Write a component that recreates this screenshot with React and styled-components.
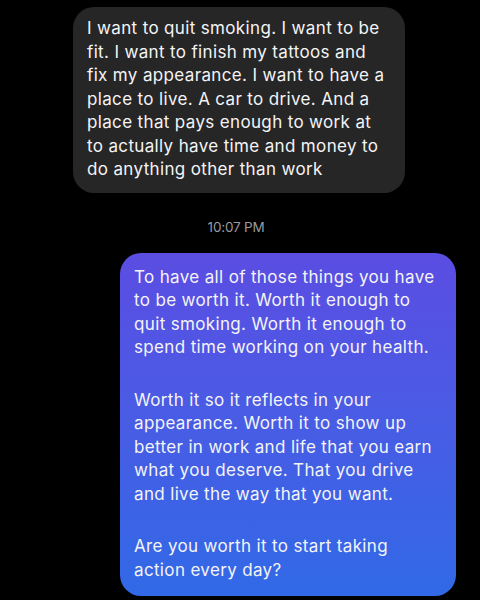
import styled, { createGlobalStyle } from 'styled-components';

const GlobalStyle = createGlobalStyle`
  html, body {
    margin: 0;
    padding: 0;
    background: #000;
  }
  body {
    font-family: Inter, "Noto Sans", "Liberation Sans", sans-serif;
    -webkit-font-smoothing: antialiased;
  }
`;

const Thread = styled.div`
  width: 480px;
  height: 600px;
  overflow: hidden;
  background: #000;
  display: flex;
  flex-direction: column;
  padding-top: 7px;
  box-sizing: border-box;
`;

const Row = styled.div`
  display: flex;
  justify-content: ${(p) => (p.$out ? 'flex-end' : 'flex-start')};
  padding: ${(p) => (p.$out ? '0 24px 0 0' : '0 0 0 73px')};
`;

const Bubble = styled.div`
  box-sizing: border-box;
  width: ${(p) => p.$width}px;
  padding: ${(p) => (p.$out ? '13px 16px 14px 14px' : '10px 16px 11px 14px')};
  border-radius: 21px;
  color: #f4f4f6;
  font-size: 17px;
  line-height: 23.5px;
  letter-spacing: 0.35px;
  background: ${(p) =>
    p.$out
      ? 'linear-gradient(180deg, #5b4de2 0%, #4a5be4 45%, #3169e6 100%)'
      : '#262626'};
`;

const Para = styled.p`
  margin: 0;
  & + & {
    margin-top: 29px;
  }
`;

const Stamp = styled.div`
  text-align: center;
  color: #9a9a9f;
  font-size: 13.5px;
  letter-spacing: -0.2px;
  padding: 26px 8px 18px 0;
`;

export default function App() {
  return (
    <>
      <GlobalStyle />
      <Thread>
        <Row>
          <Bubble $width={332}>
            <Para>
              I want to quit smoking. I want to be fit. I want to finish my tattoos and
              fix my appearance. I want to have a place to live. A car to drive. And a
              place that pays enough to work at to actually have time and money to do
              anything other than work
            </Para>
          </Bubble>
        </Row>
        <Stamp>10:07 PM</Stamp>
        <Row $out>
          <Bubble $out $width={336}>
            <Para>
              To have all of those things you have to be worth it. Worth it enough to
              quit smoking. Worth it enough to spend time working on your health.
            </Para>
            <Para>
              Worth it so it reflects in your appearance. Worth it to show up better in
              work and life that you earn what you deserve. That you drive and live the
              way that you want.
            </Para>
            <Para>Are you worth it to start taking action every day?</Para>
          </Bubble>
        </Row>
      </Thread>
    </>
  );
}
